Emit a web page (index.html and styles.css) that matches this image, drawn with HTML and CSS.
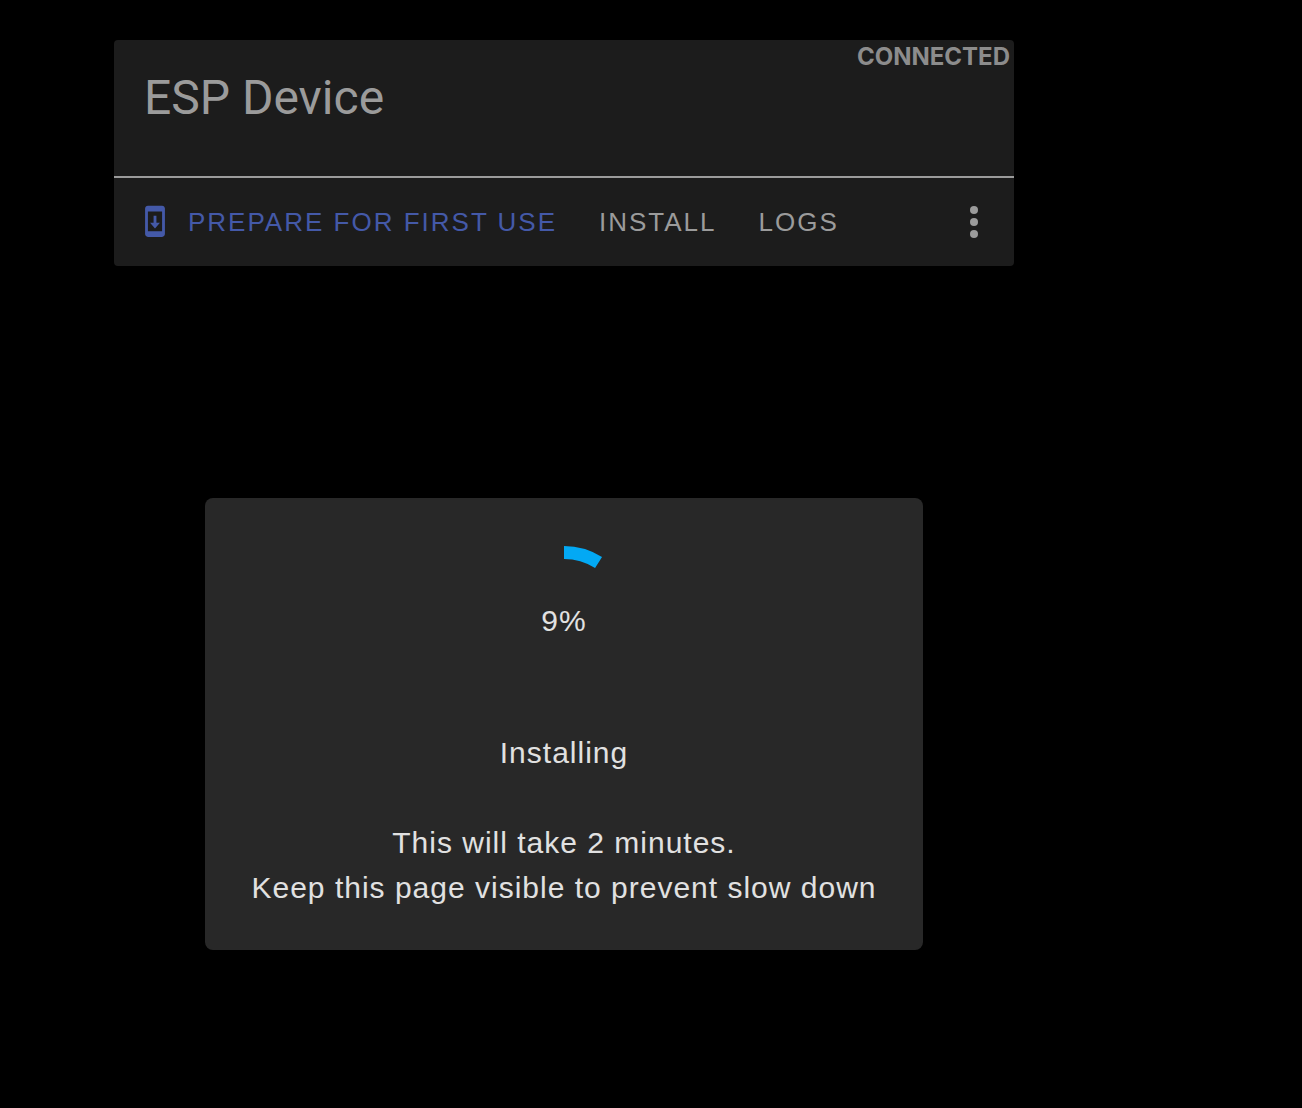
FILE: index.html
```html
<!DOCTYPE html>
<html lang="en">
<head>
<meta charset="utf-8">
<meta name="viewport" content="width=device-width, initial-scale=1">
<title>ESP Device</title>
<link rel="stylesheet" href="styles.css">
</head>
<body>
<main class="page">
  <section class="card">
    <header class="card-header">
      <h1 class="card-title">ESP Device</h1>
      <span class="status">CONNECTED</span>
    </header>
    <div class="actions">
      <button class="action action-primary" type="button">
        <svg class="action-icon" viewBox="0 0 24 24" aria-hidden="true"><path d="M17 .5H7c-1.100 0-2 .9-2 2v18c0 1.100.9 2 2 2h10c1.100 0 2-.9 2-2v-18c0-1.100-.9-2-2-2zm0 18H7v-14h10v14zm-1.500-6H13v-5h-2v5H8.500l3.500 4z"/></svg>
        <span>PREPARE FOR FIRST USE</span>
      </button>
      <button class="action" type="button">INSTALL</button>
      <button class="action" type="button">LOGS</button>
      <button class="menu-button" type="button" aria-label="More options">
        <svg class="menu-icon" viewBox="0 0 24 24" aria-hidden="true"><circle cx="12" cy="6" r="2"/><circle cx="12" cy="12" r="2"/><circle cx="12" cy="18" r="2"/></svg>
      </button>
    </div>
  </section>
  <section class="dialog" role="dialog" aria-label="Installing">
    <div class="progress" role="progressbar" aria-label="Installing" aria-valuemin="0" aria-valuemax="100" aria-valuenow="9">
      <svg class="progress-ring" viewBox="0 0 148 148" aria-hidden="true"><path d="M74 6.500A64.500 64.500 0 0 1 108.560 16.540"/></svg>
      <span class="progress-value">9%</span>
    </div>
    <p class="message">Installing</p>
    <p class="message">This will take 2 minutes.<br>Keep this page visible to prevent slow down</p>
  </section>
</main>
</body>
</html>
```
FILE: styles.css
```css
* {
  box-sizing: border-box;
}

body {
  margin: 0;
  background: #000;
  color: #9b9b9b;
  font-family: "Liberation Sans", Arial, sans-serif;
}

.page {
  display: flex;
  flex-direction: column;
  gap: 232px;
  padding: 40px 288px 40px 114px;
}

.card {
  background: #1c1c1c;
  border-radius: 4px;
}

.card-header {
  display: flex;
  justify-content: space-between;
  align-items: flex-start;
  padding: 0 4px 48px 30px;
  border-bottom: 2px solid #9b9b9b;
}

.card-title {
  margin: 28px 0 0;
  font-family: Roboto, sans-serif;
  font-size: 48px;
  font-weight: 400;
  line-height: 60px;
}

.status {
  padding-top: 2px;
  color: #8c8c8c;
  font-family: Inter, sans-serif;
  font-size: 24px;
  font-weight: 700;
  line-height: 30px;
}

.actions {
  display: flex;
  align-items: center;
  height: 88px;
  padding: 0 16px 0 8px;
  gap: 10px;
}

.action,
.menu-button {
  display: flex;
  align-items: center;
  border: 0;
  background: none;
  color: inherit;
  cursor: pointer;
}

.action {
  gap: 16px;
  padding: 0 16px;
  font-family: inherit;
  font-size: 26px;
  letter-spacing: 2px;
  line-height: 72px;
  white-space: nowrap;
}

.action-primary {
  color: #4459a8;
}

.action-icon {
  width: 34px;
  height: 34px;
  fill: currentColor;
}

.menu-button {
  margin-left: auto;
  padding: 0;
}

.menu-icon {
  width: 48px;
  height: 48px;
  fill: currentColor;
}

.dialog {
  align-self: center;
  padding: 48px 46px 40px;
  border-radius: 8px;
  background: #282828;
  color: #e1e1e1;
  font-size: 30px;
  letter-spacing: 1px;
  line-height: 45px;
  text-align: center;
}

.progress {
  display: grid;
  place-items: center;
  margin-bottom: 36px;
}

.progress-ring,
.progress-value {
  grid-area: 1 / 1;
}

.progress-ring {
  width: 148px;
  height: 148px;
  fill: none;
  stroke: #03a9f4;
  stroke-width: 13px;
}

.message {
  margin: 0;
}

.message + .message {
  margin-top: 45px;
}
```
